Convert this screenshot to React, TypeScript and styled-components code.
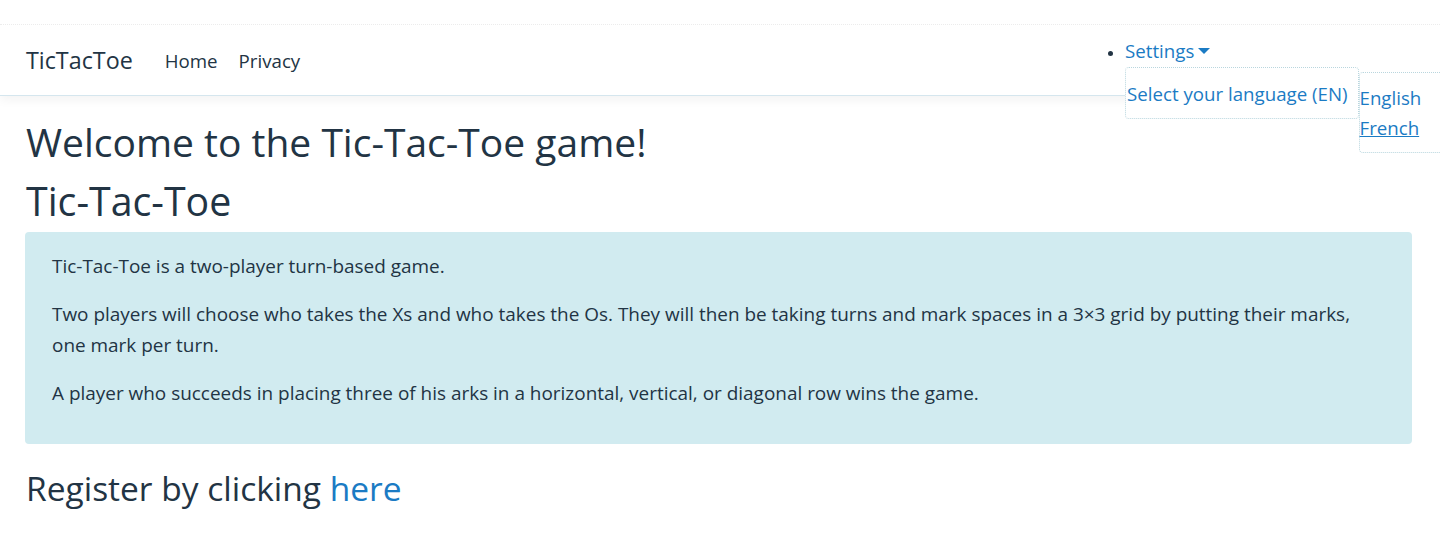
import styled, { createGlobalStyle } from 'styled-components';

const Global = createGlobalStyle`
  html, body { margin: 0; padding: 0; background: #fff; }
  body {
    font-family: "Open Sans", "Noto Sans", sans-serif;
    color: #223444;
  }
  a { color: #1b7bc4; text-decoration: none; }
`;

const Header = styled.header`
  background: #fff;
  border-bottom: 1px solid #d5e6ee;
  box-shadow: 0 4px 10px rgba(0, 0, 0, 0.05);
`;

const TopStrip = styled.div`
  height: 24px;
  border-bottom: 1px dotted #ececec;
`;

const NavRow = styled.nav`
  height: 70px;
  display: flex;
  align-items: center;
  padding-left: 26px;
`;

const Brand = styled.a`
  font-size: 23.3px;
  color: #223444;
  margin-right: 32px;
`;

const NavLink = styled.a`
  font-size: 18.7px;
  color: #223444;
  margin-right: 21px;
`;

const SettingsList = styled.ul`
  margin: 0 0 0 auto;
  padding: 0;
  width: 315px;
  align-self: flex-start;
  padding-top: 12px;
  list-style: disc;
  font-size: 18.7px;
`;

const SettingsItem = styled.li`
  position: relative;
  line-height: 28px;
  &::marker { color: #223444; font-size: 15px; }
`;

const Toggle = styled.a`
  display: inline-flex;
  align-items: center;
  gap: 4px;
`;

const Caret = styled.span`
  width: 0;
  height: 0;
  border-left: 6px solid transparent;
  border-right: 6px solid transparent;
  border-top: 6px solid #1b7bc4;
`;

const Menu = styled.div`
  position: absolute;
  top: 30px;
  left: 0;
  display: flex;
  align-items: flex-start;
  z-index: 5;
`;

const MenuBox = styled.div<{ $offset?: number }>`
  margin-top: ${(p) => p.$offset ?? 0}px;
  border: 1px dotted #b9d6de;
  border-radius: 4px;
  background: #fff;
  color: #1b7bc4;
`;

const LangLabel = styled.div`
  height: 50px;
  padding: 1px 10px 0 1px;
  box-sizing: border-box;
  display: flex;
  align-items: center;
  white-space: nowrap;
`;

const LangList = styled.div`
  width: 100px;
  padding: 10px 0 9px;
  display: flex;
  flex-direction: column;
  line-height: 30px;
`;

const LangLink = styled.a<{ $under?: boolean }>`
  text-decoration: ${(p) => (p.$under ? 'underline' : 'none')};
  align-self: flex-start;
`;

const Main = styled.main`
  padding: 0 28px 0 25px;
`;

const Title = styled.h1`
  margin: 20px 0 0 1px;
  font-size: 39px;
  font-weight: 400;
  line-height: 52px;
`;

const SubTitle = styled.h2`
  margin: 7px 0 5px 1px;
  font-size: 39.3px;
  font-weight: 400;
  line-height: 52px;
`;

const InfoBox = styled.div`
  background: #d1ebf0;
  border-radius: 4px;
  padding: 19px 28px 18px 27px;

  p {
    margin: 0 0 17px;
    font-size: 18.95px;
    line-height: 31px;
  }
`;

const Register = styled.h3`
  margin: 22px 0 0 1px;
  font-size: 33.5px;
  font-weight: 400;
  line-height: 44px;
`;

export default function App() {
  return (
    <>
      <Global />
      <Header>
        <TopStrip />
        <NavRow>
          <Brand href="#">TicTacToe</Brand>
          <NavLink href="#">Home</NavLink>
          <NavLink href="#">Privacy</NavLink>
          <SettingsList>
            <SettingsItem>
              <Toggle href="#">
                Settings <Caret />
              </Toggle>
              <Menu>
                <MenuBox>
                  <LangLabel>Select your language (EN)</LangLabel>
                </MenuBox>
                <MenuBox $offset={5}>
                  <LangList>
                    <LangLink href="#">English</LangLink>
                    <LangLink href="#" $under>French</LangLink>
                  </LangList>
                </MenuBox>
              </Menu>
            </SettingsItem>
          </SettingsList>
        </NavRow>
      </Header>
      <Main>
        <Title>Welcome to the Tic-Tac-Toe game!</Title>
        <SubTitle>Tic-Tac-Toe</SubTitle>
        <InfoBox>
          <p>Tic-Tac-Toe is a two-player turn-based game.</p>
          <p>
            Two players will choose who takes the Xs and who takes the Os. They will then be taking turns and mark
            spaces in a 3×3 grid by putting their marks, one mark per turn.
          </p>
          <p>A player who succeeds in placing three of his arks in a horizontal, vertical, or diagonal row wins the game.</p>
        </InfoBox>
        <Register>
          Register by clicking <a href="#">here</a>
        </Register>
      </Main>
    </>
  );
}
